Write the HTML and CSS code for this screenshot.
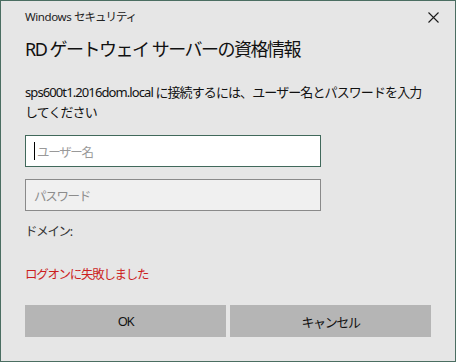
FILE: index.html
```html
<!DOCTYPE html>
<html lang="ja">

<head>
  <meta charset="UTF-8">
  <title>Windows セキュリティ</title>
  <link rel="stylesheet" href="styles.css">
</head>

<body>
  <div class="dialog">
    <div class="titlebar">
      <span class="caption">Windows <span class="kana">セキュリティ</span></span>
      <span class="close" aria-label="閉じる">
        <svg width="11" height="11" viewBox="0 0 11 11">
          <path d="M0.5 0.5 L10.5 10.5 M10.5 0.5 L0.5 10.5" stroke="#1a1a1a" stroke-width="1.1" fill="none"/>
        </svg>
      </span>
    </div>

    <h1>RD ゲートウェイ サーバーの資格情報</h1>

    <p class="message">sps600t1.2016dom.local に接続するには、ユーザー名とパスワードを入力<br>してください</p>

    <div class="field focused">
      <span class="caret"></span>
      <span class="placeholder">ユーザー名</span>
    </div>
    <div class="field disabled">
      <span class="placeholder">パスワード</span>
    </div>

    <div class="domain">ドメイン:</div>

    <div class="error">ログオンに失敗しました</div>

    <div class="buttons">
      <button type="button">OK</button>
      <button type="button">キャンセル</button>
    </div>
  </div>
</body>

</html>
```

FILE: styles.css
```css
:root {
  --window-bg: #e6e6e6;
  --window-border: #4b6e62;
  --focus-border: #41695b;
  --text-color: #111;
  --error-color: #cc1f1f;
  --button-bg: #b5b5b5;
}

* {
  margin: 0;
  padding: 0;
  box-sizing: border-box;
}

body {
  font-family: "Noto Sans", "Noto Sans CJK JP", sans-serif;
  color: var(--text-color);
  background: var(--window-bg);
}

.dialog {
  width: 456px;
  height: 362px;
  background: var(--window-bg);
  border: 1px solid var(--window-border);
  padding: 0 24px;
  display: flex;
  flex-direction: column;
}

.titlebar {
  height: 32px;
  display: flex;
  align-items: center;
  justify-content: space-between;
}

.caption {
  font-size: 11.5px;
  line-height: 16px;
  letter-spacing: -0.4px;
  color: #222;
}

.caption .kana {
  letter-spacing: -1px;
}

.close {
  display: flex;
  margin-right: -8px;
}

h1 {
  margin-top: 2px;
  font-size: 18px;
  line-height: 28px;
  font-weight: 400;
  letter-spacing: -1.5px;
}

.message {
  margin-top: 19px;
  font-size: 13px;
  line-height: 20px;
  letter-spacing: -0.9px;
  white-space: nowrap;
}

.field {
  width: 296px;
  height: 32px;
  margin-top: 13px;
  border: 1px solid #8a8a8a;
  background: #fff;
  padding-left: 8px;
  display: flex;
  align-items: center;
  font-size: 12.5px;
  letter-spacing: -1.3px;
}

.field.focused {
  border-color: var(--focus-border);
}

.field.disabled {
  margin-top: 12px;
  background: #f0f0f0;
}

.caret {
  width: 1px;
  height: 18px;
  background: #000;
  margin-right: 2px;
}

.placeholder {
  color: #999;
}

.disabled .placeholder {
  color: #8c8c8c;
}

.domain {
  margin-top: 11px;
  font-size: 12.5px;
  line-height: 20px;
  letter-spacing: -1.3px;
  color: #333;
}

.error {
  margin-top: 23px;
  font-size: 12.5px;
  line-height: 20px;
  letter-spacing: -1.3px;
  color: var(--error-color);
}

.buttons {
  margin-top: 20px;
  display: flex;
  gap: 4px;
}

button {
  flex: 1;
  height: 32px;
  border: none;
  background: var(--button-bg);
  font-family: inherit;
  font-size: 13px;
  letter-spacing: -1.4px;
  color: var(--text-color);
}
```
